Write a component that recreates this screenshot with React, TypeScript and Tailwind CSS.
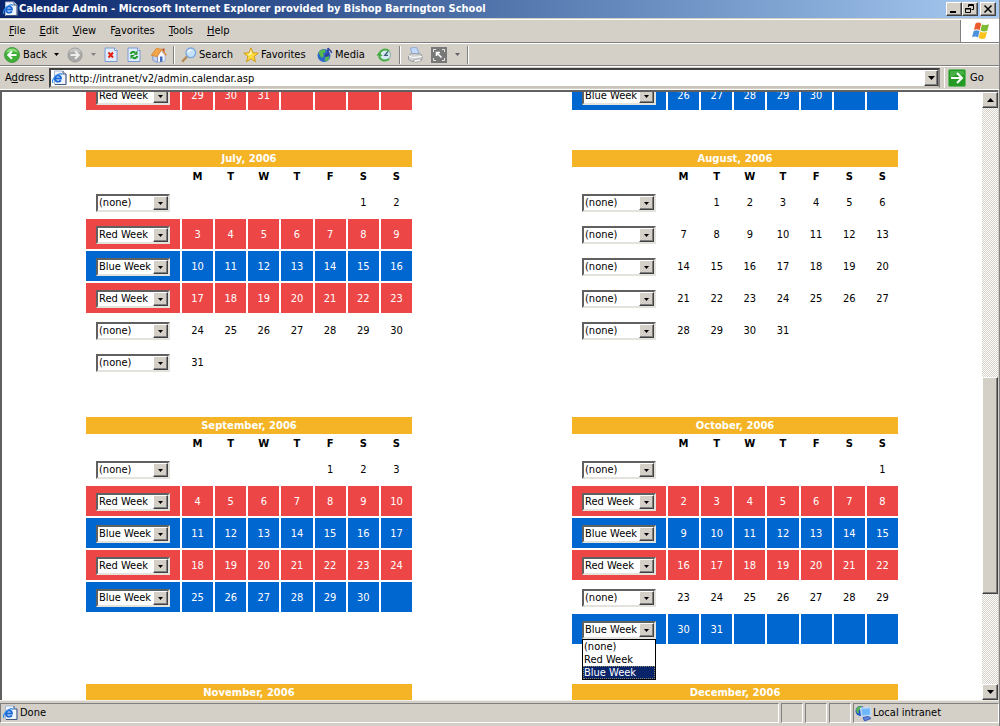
import React, { useState } from "react";
import clsx from "clsx";

type Week = "none" | "red" | "blue";

type Month = {
  name: string;
  // number of empty cells before the 1st (weeks start on Monday)
  offset: number;
  days: number;
  weeks: Week[];
};

const months: Month[] = [
  {
    name: "July, 2006",
    offset: 5,
    days: 31,
    weeks: ["none", "red", "blue", "red", "none", "none"],
  },
  {
    name: "August, 2006",
    offset: 1,
    days: 31,
    weeks: ["none", "none", "none", "none", "none"],
  },
  {
    name: "September, 2006",
    offset: 4,
    days: 30,
    weeks: ["none", "red", "blue", "red", "blue"],
  },
  {
    name: "October, 2006",
    offset: 6,
    days: 31,
    weeks: ["none", "red", "blue", "red", "none", "blue"],
  },
];

const weekOptions: { value: Week; label: string }[] = [
  { value: "none", label: "(none)" },
  { value: "red", label: "Red Week" },
  { value: "blue", label: "Blue Week" },
];

const dayNames = ["M", "T", "W", "T", "F", "S", "S"];

const raised =
  "border border-t-white border-l-white border-r-[#404040] border-b-[#404040] bg-[#d4d0c8] shadow-[inset_-1px_-1px_0_#808080]";

/* ---------- Icons ---------- */

const Triangle = ({ up = false }: { up?: boolean }) => (
  <svg width="7" height="4" viewBox="0 0 7 4">
    <path d={up ? "M0 4 3.5 0 7 4z" : "M0 0h7L3.5 4z"} fill="currentColor" />
  </svg>
);

const SmallTriangle = () => (
  <svg width="5" height="3" viewBox="0 0 5 3">
    <path d="M0 0h5L2.5 3z" fill="currentColor" />
  </svg>
);

const PageIcon = () => (
  <svg width="16" height="16" viewBox="0 0 16 16">
    <path d="M3.500 1H12l3 3v10.500H3.500z" fill="#eef3fc" stroke="#a9b9d6" />
    <path d="M15 4v10.500H4" fill="none" stroke="#44577f" />
    <path d="M12 1v3h3" fill="#cbdaf2" stroke="#44577f" />
    <path
      d="M9.800 10.300C9 11.700 6.500 12.200 5 11 3.200 9.500 3.800 6.500 6 5.700c2.300-.7 4.200.5 4 2.800H4.800"
      fill="none"
      stroke="#1766d8"
      strokeWidth="1.800"
    />
    <path
      d="M2 12.800C.5 11 3 6 7.500 4.200c2.200-.9 3.700-.6 3.300.7"
      fill="none"
      stroke="#2f8ae8"
      strokeWidth="1.200"
    />
  </svg>
);

const BackIcon = () => (
  <svg width="16" height="16" viewBox="0 0 16 16">
    <circle cx="8" cy="8" r="7.500" fill="#3fae37" stroke="#4c9c48" />
    <path d="M2 6a6.300 6.300 0 0 1 12 0C11 4 5 4 2 6z" fill="#8bdc7d" />
    <path
      d="M12.500 8H4.500M8 4.200 4.200 8 8 11.800"
      fill="none"
      stroke="#fff"
      strokeWidth="2"
    />
  </svg>
);

const ForwardIcon = () => (
  <svg width="16" height="16" viewBox="0 0 16 16">
    <circle cx="8" cy="8" r="7" fill="#a9a9a7" stroke="#9a9a98" />
    <path d="M2 6a6.300 6.300 0 0 1 12 0C11 4 5 4 2 6z" fill="#c7c7c5" />
    <path
      d="M3.500 8h8M8 4.200 11.800 8 8 11.800"
      fill="none"
      stroke="#eeeeec"
      strokeWidth="2"
    />
  </svg>
);

const StopIcon = () => (
  <svg width="14" height="16" viewBox="0 0 14 16">
    <path d="M1 1h9.500l2.500 2.500V14.500H1z" fill="#dfebff" stroke="#7d9bd2" />
    <path d="M10.500 1v2.500H13" fill="#fff" stroke="#7d9bd2" />
    <path d="m4.500 5.500 4.500 5m0-5-4.500 5" stroke="#e3230f" strokeWidth="2" />
  </svg>
);

const RefreshIcon = () => (
  <svg width="14" height="16" viewBox="0 0 14 16">
    <path d="M1 1h9.500l2.500 2.500V14.500H1z" fill="#dfebff" stroke="#7d9bd2" />
    <path d="M10.500 1v2.500H13" fill="#fff" stroke="#7d9bd2" />
    <path
      d="M3.700 7C4.200 5 6.500 4.300 8.300 5.500M10.300 9c-.5 2.200-3 2.800-4.600 1.500"
      fill="none"
      stroke="#1f9a26"
      strokeWidth="2"
    />
    <path d="M10.500 3.500v4.200H6.300zM3.500 12.300V8.100h4.200z" fill="#1f9a26" />
  </svg>
);

const HomeIcon = () => (
  <svg width="16" height="16" viewBox="0 0 16 16">
    <path d="M11.500 1.500h2v5h-2z" fill="#b5482d" />
    <path d="m6.500 8 4-4.500L14 8v6l-7.500 1.500z" fill="#f7f9ff" stroke="#a5b5da" />
    <path d="M1.800 8.500 6.500 9v6.500l-4.700-2.200z" fill="#c5d4f1" stroke="#8398c8" />
    <path d="m.3 8.300 5-6.800 5.500.8L6.200 9.500z" fill="#f3a64a" stroke="#db8c35" />
    <path d="m10.300 2.300 5.200 6.200" stroke="#e09545" strokeWidth="1.500" />
    <path d="M9 9.500h2.500v5L9 15z" fill="#4069bb" />
  </svg>
);

const SearchIcon = () => (
  <svg width="16" height="16" viewBox="0 0 16 16">
    <path d="m6 9.500-4.800 5.300" stroke="#b48a54" strokeWidth="2.400" />
    <circle cx="9.800" cy="5.800" r="4.800" fill="#c4e3fb" stroke="#7aa5de" strokeWidth="1.300" />
    <path d="M7 5.500c.3-1.800 2-2.700 3.500-2.300" fill="none" stroke="#fff" strokeWidth="1.500" />
  </svg>
);

const StarIcon = () => (
  <svg width="16" height="16" viewBox="0 0 16 16">
    <path
      d="m8 .8 1.900 5 5.400.3-4.200 3.400 1.500 5.300L8 11.800l-4.600 3 1.500-5.300L.7 6.100l5.400-.3z"
      fill="#ffdc3d"
      stroke="#d19a1c"
    />
    <path d="m8 2.800 1 4-4 2.500 1-2.700-3-.2 3.700-.1z" fill="#fff5b4" />
  </svg>
);

const MediaIcon = () => (
  <svg width="16" height="16" viewBox="0 0 16 16">
    <circle cx="7" cy="8.500" r="6.500" fill="#2c68c9" />
    <path d="M1.500 5.500C3 3 6 2 8 2.500L8.500 5 6 6.500l1 2.500-2.500 2L3 8.500z" fill="#57b84d" />
    <path d="m8.500 10 3-1 1 2-3 3.500-2-1z" fill="#57b84d" />
    <path d="M11 1v7M11 1c.5 2.500 4 2 3.500 5" fill="none" stroke="#31419c" strokeWidth="1.500" />
    <ellipse cx="9.700" cy="8.200" rx="2" ry="1.600" fill="#31419c" />
  </svg>
);

const HistoryIcon = () => (
  <svg width="16" height="16" viewBox="0 0 16 16">
    <circle cx="9" cy="8" r="5.500" fill="#d5eaf0" stroke="#8fb3ab" strokeWidth="1.200" />
    <path d="M12 4.500 8.700 8.300H12" fill="none" stroke="#3d5878" strokeWidth="1.200" />
    <path
      d="M13 12C8.500 15.500 3 12.500 3.300 8.500M3.500 6.500C5 2.500 10 1.500 13 4"
      fill="none"
      stroke="#4aac45"
      strokeWidth="2"
    />
    <path d="M.5 8.500 3.300 5 6.500 9z" fill="#3da63a" />
  </svg>
);

const PrinterIcon = () => (
  <svg width="16" height="16" viewBox="0 0 16 16">
    <path d="m3.500 1 6-.5 3 6.500H5z" fill="#c3dafc" stroke="#8fa9d6" />
    <path d="m1.500 8.500 3-2 9 .5 1.500 2v3.500L5 14.500l-3.500-2z" fill="#d3d4d6" stroke="#97999d" />
    <path d="m1.500 8.500 4 2 9.500-1" fill="none" stroke="#fff" />
    <path d="m6 13 7-1.200 1.500 2L8 15.500z" fill="#f4f4f4" stroke="#9b9b9b" strokeWidth=".7" />
  </svg>
);

const FullScreenIcon = () => (
  <svg width="16" height="16" viewBox="0 0 16 16">
    <path d="M0 0h16v16H0z" fill="#787878" />
    <path
      d="M2.500 5V2.500H5M11 2.500h2.500V5M13.500 11v2.500H11M5 13.500H2.500V11"
      fill="none"
      stroke="#e8e6e1"
    />
    <path d="M5.500 9V5.500H9M5.500 5.500l5 5" fill="none" stroke="#fff" strokeWidth="1.600" />
  </svg>
);

const GoIcon = () => (
  <svg width="18" height="18" viewBox="0 0 18 18">
    <rect x=".5" y=".5" width="17" height="17" rx="1.500" fill="#229a24" stroke="#6cb86a" />
    <path d="M2 2h14v4C11 5 6 6 2 9z" fill="#45ae44" />
    <path d="M3 9h11M9 4l5 5-5 5" fill="none" stroke="#fff" strokeWidth="2" />
  </svg>
);

const FlagIcon = () => (
  <svg width="20" height="20" viewBox="0 0 20 20">
    <path d="M4.500 2.500c2-1.300 4-1.200 5.700.2L8.700 9.200C7 8 5 7.900 3 9z" fill="#ec5a2c" />
    <path d="M11 3.200c2.200 1.200 4.500 1.200 7 .1l-1.700 6.500c-2.300 1-4.600.9-6.800-.2z" fill="#7dbb35" />
    <path d="M2.700 10c2-1.100 4-1 5.800.1L7 16.500c-1.700-1.200-3.800-1.400-6-.3z" fill="#4d90dc" />
    <path d="M9.200 10.500c2.200 1.200 4.500 1.300 6.800.3l-1.700 6.400c-2.300 1-4.500.9-6.700-.2z" fill="#f8c31c" />
  </svg>
);

const IntranetIcon = () => (
  <svg width="17" height="17" viewBox="0 0 17 17">
    <circle cx="5.500" cy="6" r="5" fill="#2353c4" />
    <path d="M1 4.500C2 1.500 5 .5 7 1.500L6 4 3.500 5.500 4 8.500 2 8z" fill="#58b956" />
    <path d="m5.500 3 10-1 .5 8.500-9.500 1z" fill="#9dc9fb" stroke="#c8dcf8" />
    <path d="m7 4.500 7.500-.8.300 5.500-7.300.8z" fill="#6bb7fa" />
    <path d="m8 12.500 5.500-1 2.500 2L9.500 16z" fill="#5f83d6" stroke="#3c5fb8" />
  </svg>
);

/* ---------- Calendar ---------- */

interface WeekSelectProps {
  value: Week;
  label: string;
  onChange: (week: Week) => void;
  open?: boolean;
}

const WeekSelect: React.FC<WeekSelectProps> = ({
  value,
  label,
  onChange,
  open = false,
}) => (
  <div className="relative ml-2.5 w-[74px]">
    <select
      aria-label={label}
      value={value}
      onChange={(e) => onChange(e.target.value as Week)}
      className="block h-[18px] w-full appearance-none border-2 border-t-[#606060] border-l-[#606060] border-r-[#e4e2dc] border-b-[#e4e2dc] bg-white pl-px text-[11px] leading-[14px] text-black outline-none"
    >
      {weekOptions.map((option) => (
        <option key={option.value} value={option.value}>
          {option.label}
        </option>
      ))}
    </select>
    <span
      className={clsx(
        "pointer-events-none absolute top-0.5 right-0.5 flex h-3.5 w-[15px] items-center justify-center text-black",
        raised
      )}
    >
      <SmallTriangle />
    </span>
    {open && (
      <ul
        role="listbox"
        className="absolute top-full left-0 z-10 w-full border border-black bg-white text-[11px] leading-[13px] text-black"
      >
        {weekOptions.map((option) => (
          <li
            key={option.value}
            role="option"
            aria-selected={option.value === value}
            onClick={() => onChange(option.value)}
            className={clsx(
              "pl-px",
              option.value === value &&
                "bg-[#0a246a] text-white outline-1 -outline-offset-1 outline-dotted outline-[#8f8a70]"
            )}
          >
            {option.label}
          </li>
        ))}
      </ul>
    )}
  </div>
);

interface WeekRowProps {
  label: string;
  initial: Week;
  cells: (number | null)[];
  initiallyOpen?: boolean;
}

const WeekRow: React.FC<WeekRowProps> = ({
  label,
  initial,
  cells,
  initiallyOpen = false,
}) => {
  const [week, setWeek] = useState<Week>(initial);
  const [open, setOpen] = useState<boolean>(initiallyOpen);

  const handleChange = (next: Week) => {
    setWeek(next);
    setOpen(false);
  };

  const color = clsx(
    week === "red" && "bg-[#ec4646] text-white",
    week === "blue" && "bg-[#0066d0] text-white"
  );

  return (
    <tr className="h-[30px]">
      <td className={clsx("p-0 pt-0.5", color)}>
        <WeekSelect
          value={week}
          label={label}
          onChange={handleChange}
          open={open}
        />
      </td>
      {cells.map((day, i) => (
        <td key={i} className={clsx("p-0 pt-0.5 text-center", color)}>
          {day}
        </td>
      ))}
    </tr>
  );
};

const Columns = () => (
  <colgroup>
    <col className="w-[94px]" />
    {dayNames.map((_, i) => (
      <col key={i} />
    ))}
  </colgroup>
);

const tableClass =
  "mx-auto w-[330px] table-fixed border-separate border-spacing-0.5 text-[11px] leading-[14px]";

const MonthTitle = ({ name }: { name: string }) => (
  <tr className="h-[17px]">
    <th
      colSpan={8}
      className="bg-[#f4b425] p-0 font-['DejaVu_Sans',sans-serif] text-[10px] font-bold text-white"
    >
      {name}
    </th>
  </tr>
);

const MonthTable = ({ month }: { month: Month }) => (
  <table className={tableClass}>
    <Columns />
    <tbody>
      <MonthTitle name={month.name} />
      <tr className="h-4 font-['DejaVu_Sans',sans-serif] text-[10px]">
        <td className="p-0" />
        {dayNames.map((name, i) => (
          <th key={i} className="p-0 font-bold">
            {name}
          </th>
        ))}
      </tr>
      {month.weeks.map((week, w) => (
        <WeekRow
          key={w}
          label={`${month.name} week ${w + 1}`}
          initial={week}
          initiallyOpen={month.name === "October, 2006" && w === 5}
          cells={dayNames.map((_, d) => {
            const day = w * 7 + d - month.offset + 1;
            return day > 0 && day <= month.days ? day : null;
          })}
        />
      ))}
    </tbody>
  </table>
);

const LastWeek = (props: WeekRowProps) => (
  <table className={tableClass}>
    <Columns />
    <tbody>
      <WeekRow {...props} />
    </tbody>
  </table>
);

const Calendar = () => (
  <div className="flex flex-col gap-9 px-1">
    {/* Tail of the months scrolled off the top */}
    <div className="grid h-5 grid-cols-2 content-end overflow-hidden">
      <LastWeek
        label="May, 2006 last week"
        initial="red"
        cells={[29, 30, 31, null, null, null, null]}
      />
      <LastWeek
        label="June, 2006 last week"
        initial="blue"
        cells={[26, 27, 28, 29, 30, null, null]}
      />
    </div>
    <div className="grid grid-cols-2 items-start gap-y-9">
      {months.map((month) => (
        <MonthTable key={month.name} month={month} />
      ))}
      {["November, 2006", "December, 2006"].map((name) => (
        <table key={name} className={tableClass}>
          <Columns />
          <tbody>
            <MonthTitle name={name} />
          </tbody>
        </table>
      ))}
    </div>
  </div>
);

/* ---------- Browser window ---------- */

const TitleBar = () => (
  <header className="flex h-[18px] shrink-0 items-center gap-px bg-linear-to-r from-[#0a246a] to-[#a6caf0] pr-[3px] pl-0.5 text-white">
    <PageIcon />
    <h1 className="flex-1 truncate text-[11px] font-bold">
      Calendar Admin - Microsoft Internet Explorer provided by Bishop Barrington
      School
    </h1>
    <div className="flex text-black">
      <button
        aria-label="Minimize"
        className={clsx("flex h-3.5 w-4 items-center justify-center", raised)}
      >
        <svg width="10" height="10" viewBox="0 0 10 10">
          <path d="M1 7h6v2H1z" />
        </svg>
      </button>
      <button
        aria-label="Restore"
        className={clsx("flex h-3.5 w-4 items-center justify-center", raised)}
      >
        <svg width="10" height="10" viewBox="0 0 10 10" fill="none" stroke="#000">
          <path d="M3.500 3V.5h5v5H6.500M3 1.500h6M.5 4.500h5v4h-5zM0 5h6" />
        </svg>
      </button>
      <button
        aria-label="Close"
        className={clsx(
          "ml-0.5 flex h-3.5 w-4 items-center justify-center",
          raised
        )}
      >
        <svg width="10" height="10" viewBox="0 0 10 10" stroke="#000" strokeWidth="1.500">
          <path d="m1.500 1.500 7 7m0-7-7 7" />
        </svg>
      </button>
    </div>
  </header>
);

const menus = [
  { before: "", key: "F", after: "ile" },
  { before: "", key: "E", after: "dit" },
  { before: "", key: "V", after: "iew" },
  { before: "F", key: "a", after: "vorites" },
  { before: "", key: "T", after: "ools" },
  { before: "", key: "H", after: "elp" },
];

const MenuBar = () => (
  <div className="mt-px flex h-6 shrink-0 border-t border-b border-t-white border-b-[#808080]">
    <nav className="flex flex-1 items-center gap-3.5 border-r border-[#808080] pl-[9px]">
      {menus.map((menu) => (
        <button key={menu.key + menu.after}>
          {menu.before}
          <u>{menu.key}</u>
          {menu.after}
        </button>
      ))}
    </nav>
    <div className="flex w-[38px] items-center justify-center border-l border-white bg-white">
      <FlagIcon />
    </div>
  </div>
);

const Divider = () => (
  <div className="h-[18px] w-0.5 border-r border-l border-r-white border-l-[#808080]" />
);

const ToolBar = () => (
  <div className="flex h-[23px] shrink-0 items-center border-t border-b border-t-white border-b-[#808080] pl-1">
    <button className="flex w-[50px] items-center gap-[3px]">
      <BackIcon />
      Back
    </button>
    <button aria-label="Back history" className="w-[13px]">
      <SmallTriangle />
    </button>
    <button aria-label="Forward" className="w-6">
      <ForwardIcon />
    </button>
    <button aria-label="Forward history" className="w-[13px] text-[#808080]">
      <SmallTriangle />
    </button>
    <button aria-label="Stop" className="w-[23px]">
      <StopIcon />
    </button>
    <button aria-label="Refresh" className="w-6">
      <RefreshIcon />
    </button>
    <button aria-label="Home" className="w-[22px]">
      <HomeIcon />
    </button>
    <Divider />
    <button className="ml-1.5 flex w-[62px] items-center gap-0.5">
      <SearchIcon />
      Search
    </button>
    <button className="flex w-[74px] items-center gap-0.5">
      <StarIcon />
      Favorites
    </button>
    <button className="flex w-[59px] items-center gap-0.5">
      <MediaIcon />
      Media
    </button>
    <button aria-label="History" className="w-[23px]">
      <HistoryIcon />
    </button>
    <Divider />
    <button aria-label="Print" className="ml-1.5 w-6">
      <PrinterIcon />
    </button>
    <button aria-label="Full screen" className="w-6">
      <FullScreenIcon />
    </button>
    <button aria-label="More tools" className="w-3 text-[#606060]">
      <SmallTriangle />
    </button>
    <Divider />
  </div>
);

const AddressBar = () => (
  <form
    onSubmit={(e) => e.preventDefault()}
    className="flex h-6 shrink-0 items-center border-t border-b border-t-white border-b-white pl-[5px]"
  >
    <label htmlFor="address" className="w-11">
      A<u>d</u>dress
    </label>
    <div className="flex h-5 flex-1 items-center border-2 border-t-[#404040] border-l-[#404040] border-r-[#808080] border-b-[#c8c4bc] bg-white">
      <PageIcon />
      <input
        id="address"
        type="text"
        defaultValue="http://intranet/v2/admin.calendar.asp"
        className="h-4 min-w-0 flex-1 bg-white pl-0.5 outline-none"
      />
      <button
        type="button"
        aria-label="Show addresses"
        className={clsx("flex h-4 w-[14px] items-center justify-center", raised)}
      >
        <Triangle />
      </button>
    </div>
    <div className="ml-1 h-5 w-px bg-white" />
    <button className="flex w-[54px] items-center gap-1 pl-[3px]">
      <GoIcon />
      Go
    </button>
  </form>
);

const ScrollBar = () => (
  <div className="flex w-4 shrink-0 flex-col bg-[repeating-conic-gradient(#d4d0c8_0_25%,#ffffff_0_50%)] bg-[length:2px_2px]">
    <button
      aria-label="Scroll up"
      className={clsx("flex h-4 items-center justify-center", raised)}
    >
      <Triangle up />
    </button>
    <div className="flex-[270]" />
    <div className={clsx("flex-[216]", raised)} />
    <div className="flex-[90]" />
    <button
      aria-label="Scroll down"
      className={clsx("flex h-4 items-center justify-center", raised)}
    >
      <Triangle />
    </button>
  </div>
);

const statusPane =
  "flex h-5 items-center border border-t-[#808080] border-l-[#808080] border-r-white border-b-white";

const StatusBar = () => (
  <footer className="flex h-[26px] shrink-0 items-start gap-0.5 border-t border-[#f0eee8] pt-0.5">
    <div className={clsx("flex-1 gap-0.5 pl-px", statusPane)}>
      <PageIcon />
      Done
    </div>
    <div className={clsx("w-[22px]", statusPane)} />
    <div className={clsx("w-[22px]", statusPane)} />
    <div className={clsx("w-[22px]", statusPane)} />
    <div className={clsx("w-[146px] gap-px pl-px", statusPane)}>
      <IntranetIcon />
      Local intranet
    </div>
  </footer>
);

const App: React.FC = () => {
  return (
    <div className="flex h-screen flex-col overflow-hidden border-r border-[#808080] bg-[#d4d0c8] font-['DejaVu_Sans_Condensed','DejaVu_Sans',sans-serif] text-[11px] leading-[14px] text-black">
      <TitleBar />
      <MenuBar />
      <ToolBar />
      <AddressBar />
      <div className="mr-px flex min-h-0 flex-1 border-t-2 border-l-2 border-[#606060] bg-white">
        <main className="min-w-0 flex-1 overflow-hidden">
          <Calendar />
        </main>
        <ScrollBar />
      </div>
      <StatusBar />
    </div>
  );
};

export default App;
